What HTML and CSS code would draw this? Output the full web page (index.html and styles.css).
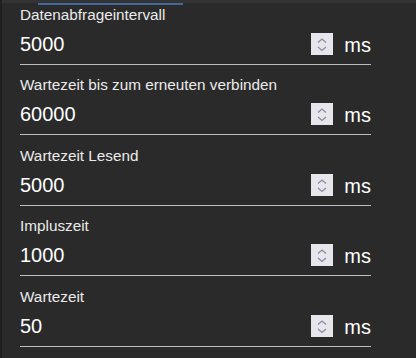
FILE: index.html
```html
<!DOCTYPE html>
<html lang="de">
<head>
<meta charset="utf-8">
<title>Einstellungen</title>
<link rel="stylesheet" href="styles.css">
</head>
<body>
<div class="frame">
  <div class="topbar"></div>
  <div class="tabline"><div class="indicator"></div></div>
  <main class="panel">
    <div class="field">
      <label class="label">Datenabfrageintervall</label>
      <div class="input-row">
        <span class="value">5000</span>
        <span class="spinner"><svg width="22" height="22" viewBox="0 0 22 22"><path d="M7 9.5 L11 6 L15 9.5" /><path d="M7 14 L11 17.5 L15 14" /></svg></span>
        <span class="unit">ms</span>
      </div>
    </div>
    <div class="field">
      <label class="label">Wartezeit bis zum erneuten verbinden</label>
      <div class="input-row">
        <span class="value">60000</span>
        <span class="spinner"><svg width="22" height="22" viewBox="0 0 22 22"><path d="M7 9.5 L11 6 L15 9.5" /><path d="M7 14 L11 17.5 L15 14" /></svg></span>
        <span class="unit">ms</span>
      </div>
    </div>
    <div class="field">
      <label class="label">Wartezeit Lesend</label>
      <div class="input-row">
        <span class="value">5000</span>
        <span class="spinner"><svg width="22" height="22" viewBox="0 0 22 22"><path d="M7 9.5 L11 6 L15 9.5" /><path d="M7 14 L11 17.5 L15 14" /></svg></span>
        <span class="unit">ms</span>
      </div>
    </div>
    <div class="field">
      <label class="label">Impluszeit</label>
      <div class="input-row">
        <span class="value">1000</span>
        <span class="spinner"><svg width="22" height="22" viewBox="0 0 22 22"><path d="M7 9.5 L11 6 L15 9.5" /><path d="M7 14 L11 17.5 L15 14" /></svg></span>
        <span class="unit">ms</span>
      </div>
    </div>
    <div class="field">
      <label class="label">Wartezeit</label>
      <div class="input-row">
        <span class="value">50</span>
        <span class="spinner"><svg width="22" height="22" viewBox="0 0 22 22"><path d="M7 9.5 L11 6 L15 9.5" /><path d="M7 14 L11 17.5 L15 14" /></svg></span>
        <span class="unit">ms</span>
      </div>
    </div>
  </main>
</div>
</body>
</html>
```

FILE: styles.css
```css
html, body {
  margin: 0;
  padding: 0;
  background: #2a2a2a;
}

body {
  font-family: "Liberation Sans", Arial, sans-serif;
  color: #ffffff;
  width: 416px;
  height: 358px;
  overflow: hidden;
}

.frame {
  border-left: 2px solid #1f1f1f;
  height: 358px;
  box-sizing: border-box;
}

.topbar {
  height: 3px;
  background: #333333;
}

.tabline {
  height: 2px;
  padding-left: 36px;
}

.indicator {
  width: 145px;
  height: 2px;
  background: #41699b;
}

.panel {
  padding: 1px 0 0 18px;
  display: flex;
  flex-direction: column;
  gap: 11.4px;
}

.field {
  width: 351px;
  display: flex;
  flex-direction: column;
}

.label {
  font-size: 15.3px;
  line-height: 18px;
  color: #ebebeb;
}

.input-row {
  display: flex;
  align-items: center;
  height: 24px;
  margin-top: 8px;
  padding-bottom: 8px;
  border-bottom: 1px solid #bdbdbd;
}

.value {
  flex: 1;
  font-size: 20px;
  line-height: 24px;
  color: #ffffff;
}

.spinner {
  width: 22px;
  height: 22px;
  background: #e6e6ec;
  display: flex;
}

.spinner svg {
  display: block;
  fill: none;
  stroke: #8c8c9c;
  stroke-width: 1.3;
}

.unit {
  margin-left: 11px;
  padding-top: 3px;
  font-size: 20px;
  line-height: 21px;
  color: #ffffff;
}
```
